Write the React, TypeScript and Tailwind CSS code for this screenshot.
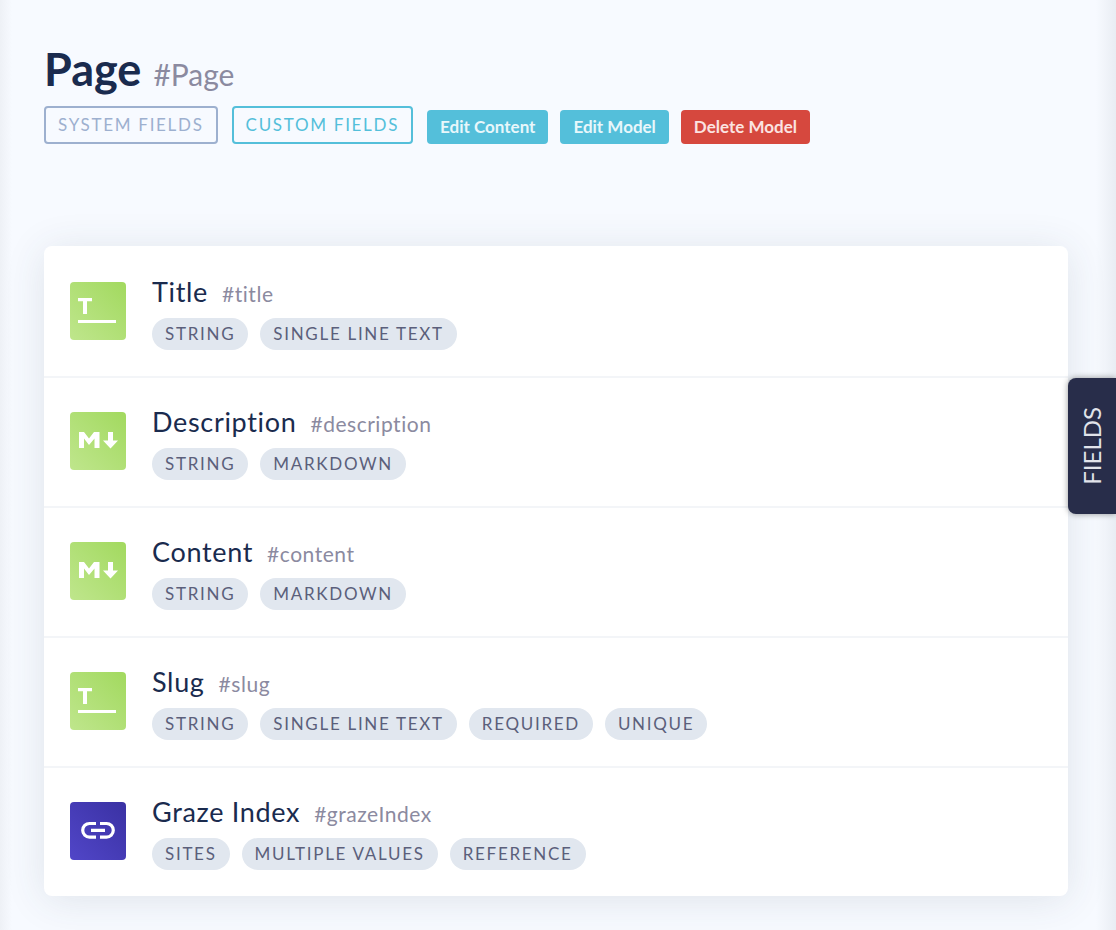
import type { ReactNode } from "react";

type IconKind = "text" | "markdown" | "link";

interface Field {
  name: string;
  apiId: string;
  icon: IconKind;
  tags: string[];
}

const fields: Field[] = [
  { name: "Title", apiId: "#title", icon: "text", tags: ["String", "Single line text"] },
  { name: "Description", apiId: "#description", icon: "markdown", tags: ["String", "Markdown"] },
  { name: "Content", apiId: "#content", icon: "markdown", tags: ["String", "Markdown"] },
  { name: "Slug", apiId: "#slug", icon: "text", tags: ["String", "Single line text", "Required", "Unique"] },
  { name: "Graze Index", apiId: "#grazeIndex", icon: "link", tags: ["Sites", "Multiple values", "Reference"] },
];

function FieldIcon({ kind }: { kind: IconKind }) {
  const background =
    kind === "link"
      ? "bg-linear-to-tr from-[#5146c8] to-[#3a31a3]"
      : "bg-linear-to-tr from-[#bfe68c] to-[#a2d95e]";
  return (
    <div className={`h-[58px] w-14 shrink-0 overflow-hidden rounded ${background}`}>
      <svg viewBox="0 0 56 58" className="h-full w-full" fill="#fff" aria-hidden="true">
        {kind === "text" && <path d="M8 16h14v3.200h-5V32h-4V19.200H8zM8 38h38v3H8z" />}
        {kind === "markdown" && (
          <path d="M9 36V20h5l5 6.500 5-6.500h5.500v16h-5V26.500l-5.500 6.500-5-6.500V36zM38 20h5v8.500h5L40.500 36.500 33 28.500h5z" />
        )}
        {kind === "link" && (
          <>
            <path
              d="M26 21.500h-6.500a6.800 6.800 0 0 0 0 13.600H26M30 21.500h6.500a6.800 6.800 0 0 1 0 13.600H30"
              fill="none"
              stroke="#fff"
              strokeWidth="3.200"
            />
            <path d="M21 26.700h14v3.200H21z" />
          </>
        )}
      </svg>
    </div>
  );
}

function Tag({ children }: { children: ReactNode }) {
  return (
    <li className="flex h-8 items-center rounded-full bg-[#e1e7ef] px-[13px] text-[17px] tracking-widest text-[#5b5f7b] uppercase">
      {children}
    </li>
  );
}

function FieldRow({ field }: { field: Field }) {
  return (
    <li className="flex items-center gap-[26px] border-b-2 border-[#f3f5f8] px-[26px] pt-6 pb-[26px] last:border-b-0">
      <FieldIcon kind={field.icon} />
      <div>
        <div className="flex items-baseline gap-[14px]">
          <h2 className="text-[27px] leading-10 tracking-wide text-[#1a2b4e]">{field.name}</h2>
          <span className="text-[21px] leading-8 tracking-wide text-[#8b8aa0]">{field.apiId}</span>
        </div>
        <ul className="mt-[6px] flex flex-wrap gap-3">
          {field.tags.map((tag) => (
            <Tag key={tag}>{tag}</Tag>
          ))}
        </ul>
      </div>
    </li>
  );
}

export default function App() {
  return (
    <div className="relative min-h-screen bg-[#f7faff] px-11 pt-[42px] pb-[34px] font-['Lato',sans-serif]">
      <div className="pointer-events-none absolute inset-y-0 left-0 w-3 bg-linear-to-r from-[#eef1f6] to-[#f7faff]" />
      <div className="pointer-events-none absolute inset-y-0 right-0 w-5 bg-linear-to-l from-[#e9edf3] to-[#f7faff]" />

      <header>
        <div className="flex items-baseline gap-3">
          <h1 className="text-[45px] leading-[54px] font-bold text-[#1a2b4e]">Page</h1>
          <span className="text-[30px] leading-9 text-[#8b8aa0]">#Page</span>
        </div>
        <div className="mt-[10px] flex flex-wrap items-end gap-3">
          <div className="flex gap-[14px] pr-[2px]">
            <button
              type="button"
              className="h-[38px] rounded border-2 border-[#9db0cf] px-3 text-[17px] tracking-widest text-[#9db0cf] uppercase"
            >
              System fields
            </button>
            <button
              type="button"
              className="h-[38px] rounded border-2 border-[#54bfda] px-3 text-[17px] tracking-widest text-[#54bfda] uppercase"
            >
              Custom fields
            </button>
          </div>
          <button type="button" className="h-[34px] rounded bg-[#54bfda] px-[13px] text-[17px] font-bold text-[#e8f7fb]">
            Edit Content
          </button>
          <button type="button" className="h-[34px] rounded bg-[#54bfda] px-[13px] text-[17px] font-bold text-[#e8f7fb]">
            Edit Model
          </button>
          <button type="button" className="h-[34px] rounded bg-[#d6483e] px-[13px] text-[17px] font-bold text-[#fbe3e1]">
            Delete Model
          </button>
        </div>
      </header>

      <ul className="relative mt-[102px] mr-1 rounded-lg bg-white pt-[2px] shadow-[0_4px_40px_rgba(50,65,85,0.12)]">
        {fields.map((field) => (
          <FieldRow key={field.apiId} field={field} />
        ))}
      </ul>

      <button
        type="button"
        className="absolute top-[378px] right-0 flex h-[136px] w-12 items-center justify-center rounded-l-lg bg-[#282d4a] text-2xl text-[#e1e3ea] shadow-[0_0_6px_rgba(0,0,0,0.4)]"
      >
        <span className="rotate-180 [writing-mode:vertical-rl]">FIELDS</span>
      </button>
    </div>
  );
}
